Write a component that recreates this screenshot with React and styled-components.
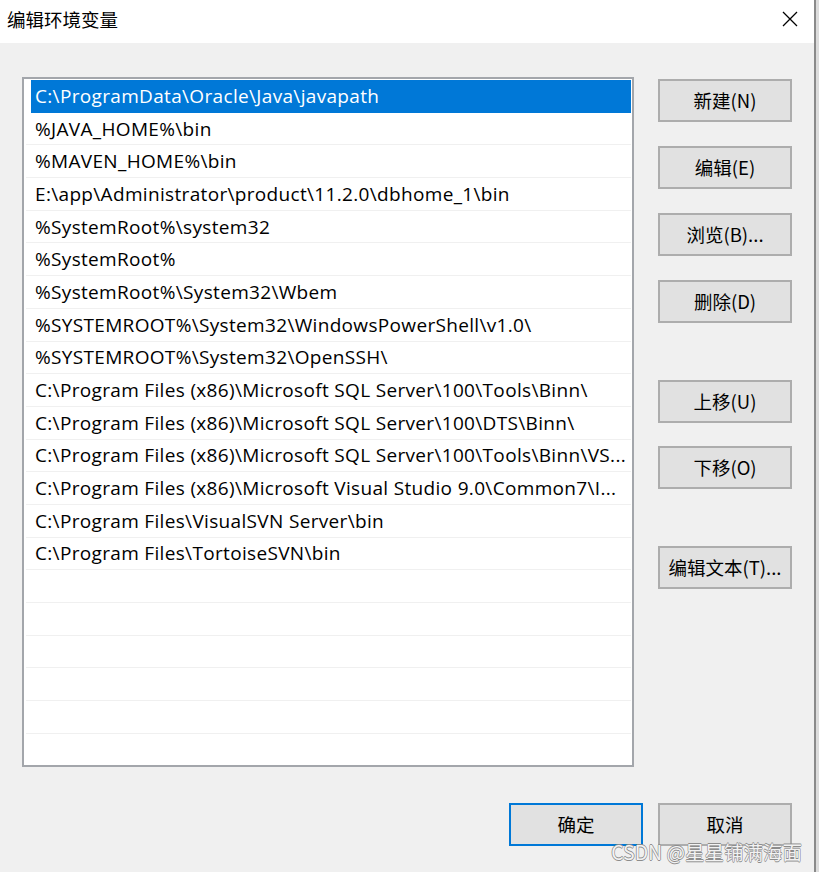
import React from "react";
import styled, { createGlobalStyle } from "styled-components";

const GlobalStyle = createGlobalStyle`
  html, body {
    margin: 0;
    padding: 0;
    background: #dcdcdc;
  }
  body {
    font-family: "Open Sans", "Noto Sans CJK SC", sans-serif;
  }
`;

const Window = styled.div`
  position: relative;
  width: 814px;
  height: 872px;
  background: #f0f0f0;
  border-right: 2px solid #8a8a8a;
  display: flex;
  flex-direction: column;
  overflow: hidden;
`;

const TitleBar = styled.div`
  height: 43px;
  background: #ffffff;
  display: flex;
  align-items: center;
  justify-content: space-between;
  padding: 0 16px 5px 7px;
  box-sizing: border-box;
`;

const Title = styled.div`
  font-family: "Noto Sans CJK SC", sans-serif;
  font-size: 18.5px;
  color: #000;
`;

const CloseButton = styled.div`
  width: 16px;
  height: 16px;
  display: flex;
  align-items: center;
  justify-content: center;
`;

const Body = styled.div`
  flex: 1;
  display: flex;
  flex-direction: column;
  padding: 34px 22px 0 22px;
`;

const MainRow = styled.div`
  display: flex;
  gap: 24px;
`;

const ListBox = styled.div`
  width: 612px;
  height: 690px;
  box-sizing: border-box;
  background: #ffffff;
  border: 2px solid #a3a6ab;
  padding: 1px 1px 0 1px;
  overflow: hidden;
`;

const Row = styled.div`
  height: 32.7px;
  box-sizing: border-box;
  display: flex;
  align-items: center;
  padding-left: 9px;
  margin-left: 1px;
  font-size: 19px;
  letter-spacing: 0.33px;
  white-space: nowrap;
  color: ${(p) => (p.selected ? "#ffffff" : "#000000")};
  background: ${(p) =>
    p.selected
      ? "linear-gradient(to right, transparent 5px, #0078d7 5px)"
      : "transparent"};
  border-bottom: 1px solid ${(p) => (p.selected ? "transparent" : "#f0f0f0")};
`;

const ButtonColumn = styled.div`
  width: 134px;
  display: flex;
  flex-direction: column;
  padding-top: 2px;
`;

const Button = styled.button`
  width: 134px;
  height: 43px;
  box-sizing: border-box;
  margin-top: ${(p) => p.gap || 0}px;
  background: #e1e1e1;
  border: ${(p) => (p.primary ? "2px solid #0078d7" : "2px solid #adadad")};
  font-family: "Noto Sans CJK SC", sans-serif;
  font-size: 18.5px;
  color: #000;
  padding: 0 0 2px 0;
  display: flex;
  align-items: center;
  justify-content: center;
`;

const Footer = styled.div`
  display: flex;
  justify-content: flex-end;
  gap: 15px;
  margin-top: 36px;
`;

const Watermark = styled.div`
  position: absolute;
  right: 12px;
  bottom: 6px;
  font-family: "Noto Sans CJK SC", sans-serif;
  font-size: 19.5px;
  color: #f2f2f2;
  text-shadow: -0.6px 0 #8c8c8c, 0.6px 0 #8c8c8c, 0 -0.6px #8c8c8c, 0 0.6px #8c8c8c;
  white-space: nowrap;
`;

const paths = [
  "C:\\ProgramData\\Oracle\\Java\\javapath",
  "%JAVA_HOME%\\bin",
  "%MAVEN_HOME%\\bin",
  "E:\\app\\Administrator\\product\\11.2.0\\dbhome_1\\bin",
  "%SystemRoot%\\system32",
  "%SystemRoot%",
  "%SystemRoot%\\System32\\Wbem",
  "%SYSTEMROOT%\\System32\\WindowsPowerShell\\v1.0\\",
  "%SYSTEMROOT%\\System32\\OpenSSH\\",
  "C:\\Program Files (x86)\\Microsoft SQL Server\\100\\Tools\\Binn\\",
  "C:\\Program Files (x86)\\Microsoft SQL Server\\100\\DTS\\Binn\\",
  "C:\\Program Files (x86)\\Microsoft SQL Server\\100\\Tools\\Binn\\VS...",
  "C:\\Program Files (x86)\\Microsoft Visual Studio 9.0\\Common7\\I...",
  "C:\\Program Files\\VisualSVN Server\\bin",
  "C:\\Program Files\\TortoiseSVN\\bin",
  "",
  "",
  "",
  "",
  "",
  "",
];

const sideButtons = [
  { label: "新建(N)", gap: 0 },
  { label: "编辑(E)", gap: 24 },
  { label: "浏览(B)...", gap: 24 },
  { label: "删除(D)", gap: 24 },
  { label: "上移(U)", gap: 57 },
  { label: "下移(O)", gap: 23 },
  { label: "编辑文本(T)...", gap: 57 },
];

export default function App() {
  return (
    <>
      <GlobalStyle />
      <Window>
        <TitleBar>
          <Title>编辑环境变量</Title>
          <CloseButton>
            <svg width="16" height="16" viewBox="0 0 16 16">
              <path d="M1 1 L15 15 M15 1 L1 15" stroke="#000" strokeWidth="1.3" />
            </svg>
          </CloseButton>
        </TitleBar>
        <Body>
          <MainRow>
            <ListBox>
              {paths.map((p, i) => (
                <Row key={i} selected={i === 0}>
                  {p}
                </Row>
              ))}
            </ListBox>
            <ButtonColumn>
              {sideButtons.map((b) => (
                <Button key={b.label} gap={b.gap}>
                  {b.label}
                </Button>
              ))}
            </ButtonColumn>
          </MainRow>
          <Footer>
            <Button primary>确定</Button>
            <Button>取消</Button>
          </Footer>
        </Body>
        <Watermark>CSDN @星星铺满海面</Watermark>
      </Window>
    </>
  );
}
